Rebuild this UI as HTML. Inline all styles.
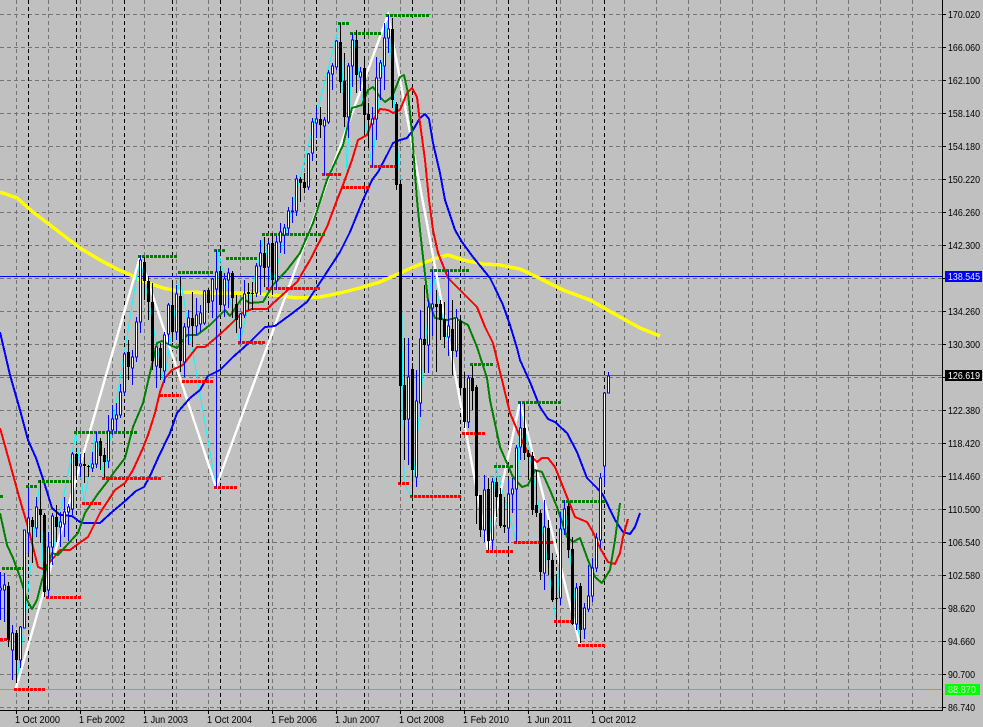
<!DOCTYPE html>
<html><head><meta charset="utf-8"><style>
html,body{margin:0;padding:0;background:#c0c0c0;width:983px;height:727px;overflow:hidden}
svg{display:block}
text{font-family:"Liberation Sans",sans-serif;font-size:10.5px;fill:#000}
</style></head><body>
<svg width="983" height="727" viewBox="0 0 983 727" xmlns="http://www.w3.org/2000/svg">
<rect width="983" height="727" fill="#c0c0c0"/>
<g shape-rendering="crispEdges">
<path fill="none" stroke="#747474" stroke-dasharray="4 3" d="M0 14.5H942M0 47.5H942M0 80.5H942M0 113.5H942M0 146.5H942M0 179.5H942M0 212.5H942M0 245.5H942M0 278.5H942M0 311.5H942M0 344.5H942M0 377.5H942M0 410.5H942M0 443.5H942M0 476.5H942M0 509.5H942M0 542.5H942M0 575.5H942M0 608.5H942M0 641.5H942M0 674.5H942M0 707.5H942"/>
<path fill="none" stroke="#747474" stroke-dasharray="4 3" d="M16.5 0V710M48.5 0V710M80.5 0V710M112.5 0V710M144.5 0V710M176.5 0V710M208.5 0V710M240.5 0V710M272.5 0V710M304.5 0V710M336.5 0V710M368.5 0V710M400.5 0V710M432.5 0V710M464.5 0V710M496.5 0V710M528.5 0V710M560.5 0V710M592.5 0V710M624.5 0V710M656.5 0V710M688.5 0V710M720.5 0V710M752.5 0V710M784.5 0V710M816.5 0V710M848.5 0V710M880.5 0V710M912.5 0V710"/>
<path fill="none" stroke="#000" stroke-dasharray="4 3" d="M28.5 0V710M76.5 0V710M124.5 0V710M172.5 0V710M220.5 0V710M268.5 0V710M316.5 0V710M364.5 0V710M412.5 0V710M460.5 0V710M508.5 0V710M556.5 0V710M604.5 0V710"/>
<path stroke="#606060" d="M0 375.5H942"/>
<path stroke="#0000ff" d="M0 276.5H942"/>
<path stroke="#00ff00" d="M0 689.5H942"/>
<polyline fill="none" stroke="#ffff00" stroke-width="3.5" stroke-linejoin="round" points="0,192 17,198 33,212 50,225 67,238 80,248 100,260 117,269 133,276 140,280 163,288 183,292 213,293 250,293 273,295 297,298 320,297 340,293 360,288 380,282 400,273 423,263 440,257 448,255 463,260 483,264 500,265 520,269 537,277 563,290 590,300 620,317 640,328 660,336"/>
<polyline fill="none" stroke="#00ffff" stroke-width="1" points="16,688 24,628 40,480 44,597 76,433 84,503 96,432 104,477 140,257 164,383 180,277 216,487 218,250 240,343 264,237 272,286 340,23 347,173 353,33 372,167 388,15 400,180 404,484 412,497 432,270 460,397 488,550 496,467 516,540 520,402 540,513 556,620 564,500 580,645"/>
<polyline fill="none" stroke="#ffffff" stroke-width="2.4" points="16,688 140,257 216,487 388,15 488,550 520,402 580,645"/>
<polyline fill="none" stroke="#0000ff" stroke-width="2" stroke-linejoin="round" points="0,332 10,375 20,410 28,440 36,458 44,482 52,508 60,515 72,516 80,522 84,523 100,523 112,512 124,502 136,491 144,487 150,476 158,458 170,433 177,413 190,398 200,390 208,376 220,370 233,357 250,342 265,327 275,326 290,315 307,302 323,278 340,252 350,232 363,200 372,180 378,172 387,155 393,143 400,140 407,138 413,130 420,118 425,114 429,119 433,143 440,173 445,200 455,230 462,242 473,257 490,278 495,288 503,305 510,325 517,348 520,360 530,382 540,407 548,419 555,422 567,433 577,452 587,478 597,488 603,495 615,520 623,532 630,534 635,527 640,513"/>
<polyline fill="none" stroke="#ff0000" stroke-width="2" stroke-linejoin="round" points="0,428 7,453 20,500 28,527 38,567 43,569 50,562 60,550 70,550 78,544 88,537 100,513 115,490 125,483 133,470 143,448 148,435 155,413 160,392 165,378 172,370 183,365 197,347 205,347 217,337 230,325 242,313 252,309 267,309 280,297 297,282 310,260 327,227 337,200 343,185 352,160 358,140 367,135 372,122 380,109 388,110 393,113 400,110 407,93 412,88 417,97 420,123 425,160 429,200 433,230 438,253 448,278 460,290 477,307 485,327 493,343 499,368 502,380 510,413 518,432 528,453 537,462 542,458 548,458 555,467 563,487 575,517 587,522 593,532 600,548 608,562 615,564 620,553 623,537 628,519"/>
<polyline fill="none" stroke="#008000" stroke-width="2" stroke-linejoin="round" points="0,513 7,545 13,558 20,577 27,600 32,609 37,600 42,580 52,553 58,555 67,545 78,533 85,513 97,495 107,482 115,471 125,458 133,427 143,403 150,373 157,343 162,341 170,345 177,348 187,335 197,335 210,325 220,315 225,310 230,316 242,298 250,303 263,302 273,285 287,270 300,253 313,223 327,180 343,145 352,108 362,105 368,90 373,87 380,97 385,102 392,97 400,77 404,75 408,93 412,133 415,173 417,200 420,230 423,257 428,300 435,318 447,320 455,318 468,325 477,347 487,378 490,400 500,447 513,477 522,487 528,485 535,470 542,472 550,490 557,507 567,537 573,542 580,538 588,560 595,577 602,583 610,570 615,540 620,503"/>
<path fill="none" stroke="#008000" stroke-width="3" stroke-dasharray="3 1" d="M0 496.5H3M2 568.5H23M26 486.5H38M38 481.5H71M74 432.5H137M138 256.5H177M178 272.5H213M214 250.5H225M226 258.5H258M262 234.5H325M338 23.5H349M350 33.5H382M386 15.5H429M430 270.5H469M470 364.5H493M494 466.5H513M518 402.5H561M562 501.5H605"/>
<path fill="none" stroke="#ff0000" stroke-width="3" stroke-dasharray="3 1" d="M0 639.5H10M14 689.5H45M46 597.5H81M82 503.5H101M102 478.5H162M160 395.5H181M182 381.5H213M214 487.5H238M238 342.5H265M266 288.5H320M322 174.5H342M342 187.5H369M370 166.5H396M398 483.5H409M410 496.5H462M462 433.5H485M486 551.5H513M514 542.5H553M554 621.5H572M578 645.5H605"/>
<!-- black wicks -->
<path fill="none" stroke="#000" d="M8.5 582V647M16.5 630V683M32.5 517V563M40.5 480V543M44.5 513V597M56.5 505V542M76.5 453V480M84.5 453V483M88.5 465V477M100.5 438V470M104.5 448V478M128.5 340V380M144.5 257V300M148.5 277V320M152.5 283V370M160.5 343V380M172.5 282V342M180.5 277V372M192.5 292V347M208.5 288V313M220.5 268V308M232.5 271V318M236.5 295V333M248.5 283V310M252.5 282V310M264.5 237V287M272.5 233V295M300.5 177V202M304.5 173V193M320.5 107V138M340.5 23V93M344.5 53V127M356.5 30V93M364.5 57V133M368.5 103V148M392.5 18V108M396.5 102V190M400.5 180V484M404.5 338V460M412.5 363V497M424.5 285V373M436.5 290V372M440.5 300V340M444.5 302V348M452.5 300V375M460.5 318V392M464.5 372V428M472.5 365V410M476.5 385V524M480.5 495V537M488.5 478V550M496.5 478V517M500.5 488V528M504.5 497V533M524.5 403V460M528.5 450V480M532.5 452V515M536.5 470V517M540.5 510V580M548.5 520V575M552.5 553V602M556.5 577V620M568.5 503V558M572.5 537V625M580.5 583V643"/>
<!-- black bodies -->
<path fill="none" stroke="#000" stroke-width="3" d="M8.5 586V640M16.5 633V660M32.5 520V527M40.5 509V515M44.5 515V592M56.5 517V527M76.5 454V466M84.5 464V466M88.5 466V467M100.5 441V456M104.5 455V462M128.5 352V367M144.5 262V281M148.5 281V302M152.5 302V361M160.5 348V368M172.5 305V332M180.5 296V361M192.5 318V326M208.5 290V303M220.5 271V305M232.5 273V298M236.5 304V320M248.5 292V294M252.5 293V294M264.5 253V268M272.5 243V280M300.5 179V183M304.5 182V188M320.5 119V125M340.5 42V82M344.5 81V117M356.5 40V75M364.5 68V115M368.5 114V120M392.5 29V100M396.5 104V185M400.5 184V386M404.5 385V420M412.5 369V470M424.5 339V345M436.5 304V307M440.5 304V320M444.5 319V337M452.5 329V351M460.5 321V388M464.5 388V422M472.5 378V391M476.5 387V496M480.5 495V530M488.5 489V541M496.5 482V497M500.5 494V526M504.5 525V527M524.5 428V453M528.5 453V457M532.5 456V510M536.5 505V513M540.5 513V572M548.5 528V560M552.5 560V600M556.5 598V599M568.5 506V550M572.5 549V624M580.5 586V630"/>
<!-- blue wicks -->
<path fill="none" stroke="#0000ff" d="M.5 572V620M4.5 573V622M12.5 625V680M20.5 626V668M24.5 530V628M28.5 487V553M36.5 497V537M48.5 532V598M52.5 513V565M60.5 512V547M64.5 497V537M68.5 504V541M72.5 452V515M80.5 454V477M92.5 452V472M96.5 432V468M108.5 415V468M112.5 405V435M116.5 403V432M120.5 384V418M124.5 352V395M132.5 350V385M136.5 317V362M140.5 255V333M156.5 347V388M164.5 332V383M168.5 303V345M176.5 285V340M184.5 323V377M188.5 310V345M196.5 298V335M200.5 305V332M204.5 290V325M212.5 278V318M216.5 250V487M224.5 273V317M228.5 268V308M240.5 313V343M244.5 280V318M256.5 263V297M260.5 240V295M268.5 241V287M276.5 236V290M280.5 223V253M284.5 224V254M288.5 207V235M292.5 197V223M296.5 175V216M308.5 153V190M312.5 118V161M316.5 108V138M324.5 117V175M328.5 70V124M332.5 63V90M336.5 40V70M348.5 63V138M352.5 33V87M360.5 67V91M372.5 107V167M376.5 57V140M380.5 60V100M384.5 23V90M388.5 15V53M408.5 338V465M416.5 370V487M420.5 310V417M428.5 300V373M432.5 270V336M448.5 270V356M456.5 309V357M468.5 375V428M484.5 475V542M492.5 478V550M508.5 480V542M512.5 478V513M516.5 445V542M520.5 402V460M544.5 500V590M560.5 512V605M564.5 500V535M576.5 583V630M584.5 603V639M588.5 565V612M592.5 558V602M596.5 533V572M600.5 473V548M604.5 393V485M608.5 372V393"/>
<!-- blue bodies -->
<path fill="#ffffff" stroke="#0000ff" d="M-.5 588h2V590h-2zM3.5 585h2V590h-2zM11.5 633h2V650h-2zM19.5 627h2V660h-2zM23.5 530h2V628h-2zM27.5 518h2V533h-2zM35.5 507h2V528h-2zM47.5 547h2V590h-2zM51.5 516h2V547h-2zM59.5 522h2V527h-2zM63.5 512h2V524h-2zM67.5 507h2V512h-2zM71.5 454h2V509h-2zM79.5 464h2V466h-2zM91.5 464h2V468h-2zM95.5 442h2V464h-2zM107.5 431h2V461h-2zM111.5 419h2V430h-2zM115.5 415h2V419h-2zM119.5 392h2V415h-2zM123.5 354h2V392h-2zM131.5 357h2V368h-2zM135.5 322h2V357h-2zM139.5 260h2V322h-2zM155.5 347h2V366h-2zM163.5 335h2V371h-2zM167.5 305h2V334h-2zM175.5 294h2V332h-2zM183.5 327h2V362h-2zM187.5 318h2V327h-2zM195.5 315h2V326h-2zM199.5 313h2V324h-2zM203.5 291h2V323h-2zM211.5 279h2V301h-2zM215.5 272h2V289h-2zM223.5 279h2V305h-2zM227.5 273h2V280h-2zM239.5 314h2V328h-2zM243.5 294h2V315h-2zM255.5 266h2V293h-2zM259.5 253h2V266h-2zM267.5 244h2V267h-2zM275.5 242h2V281h-2zM279.5 232h2V242h-2zM283.5 228h2V235h-2zM287.5 211h2V228h-2zM291.5 211h2V212h-2zM295.5 179h2V211h-2zM307.5 154h2V187h-2zM311.5 122h2V153h-2zM315.5 119h2V123h-2zM323.5 120h2V126h-2zM327.5 73h2V122h-2zM331.5 66h2V74h-2zM335.5 41h2V67h-2zM347.5 66h2V117h-2zM351.5 40h2V66h-2zM359.5 72h2V77h-2zM371.5 119h2V124h-2zM375.5 78h2V119h-2zM379.5 63h2V78h-2zM383.5 38h2V66h-2zM387.5 29h2V38h-2zM407.5 377h2V419h-2zM415.5 401h2V477h-2zM419.5 339h2V403h-2zM427.5 307h2V345h-2zM431.5 304h2V308h-2zM447.5 326h2V337h-2zM455.5 318h2V351h-2zM467.5 378h2V422h-2zM483.5 490h2V530h-2zM491.5 482h2V540h-2zM507.5 494h2V528h-2zM511.5 489h2V494h-2zM515.5 448h2V489h-2zM519.5 428h2V447h-2zM543.5 527h2V573h-2zM559.5 529h2V598h-2zM563.5 509h2V529h-2zM575.5 588h2V624h-2zM583.5 608h2V629h-2zM587.5 596h2V609h-2zM591.5 568h2V596h-2zM595.5 538h2V568h-2zM599.5 478h2V540h-2zM603.5 393h2V466h-2zM607.5 376h2V393h-2z"/>
<!-- axes -->
<path fill="none" stroke="#000" d="M942.5 0V710.5H0"/>
<path fill="none" stroke="#000" d="M943 14.5h3M943 47.5h3M943 80.5h3M943 113.5h3M943 146.5h3M943 179.5h3M943 212.5h3M943 245.5h3M943 278.5h3M943 311.5h3M943 344.5h3M943 377.5h3M943 410.5h3M943 443.5h3M943 476.5h3M943 509.5h3M943 542.5h3M943 575.5h3M943 608.5h3M943 641.5h3M943 674.5h3M943 707.5h3"/>
<path fill="none" stroke="#000" d="M16.5 711v3M80.5 711v3M144.5 711v3M208.5 711v3M272.5 711v3M336.5 711v3M400.5 711v3M464.5 711v3M528.5 711v3M592.5 711v3"/>
<rect x="945" y="271" width="37" height="11" fill="#0000ff"/>
<rect x="945" y="370" width="37" height="11" fill="#000"/>
<rect x="945" y="684" width="35" height="11" fill="#00ff00"/>
</g>
<text x="948" y="18" textLength="32" lengthAdjust="spacingAndGlyphs">170.020</text>
<text x="948" y="51" textLength="32" lengthAdjust="spacingAndGlyphs">166.060</text>
<text x="948" y="84" textLength="32" lengthAdjust="spacingAndGlyphs">162.100</text>
<text x="948" y="117" textLength="32" lengthAdjust="spacingAndGlyphs">158.140</text>
<text x="948" y="150" textLength="32" lengthAdjust="spacingAndGlyphs">154.180</text>
<text x="948" y="183" textLength="32" lengthAdjust="spacingAndGlyphs">150.220</text>
<text x="948" y="216" textLength="32" lengthAdjust="spacingAndGlyphs">146.260</text>
<text x="948" y="249" textLength="32" lengthAdjust="spacingAndGlyphs">142.300</text>
<text x="948" y="280" textLength="32" lengthAdjust="spacingAndGlyphs" style="fill:#e8e8ff">138.545</text>
<text x="948" y="315" textLength="32" lengthAdjust="spacingAndGlyphs">134.260</text>
<text x="948" y="348" textLength="32" lengthAdjust="spacingAndGlyphs">130.300</text>
<text x="948" y="379" textLength="32" lengthAdjust="spacingAndGlyphs" style="fill:#fff">126.619</text>
<text x="948" y="414" textLength="32" lengthAdjust="spacingAndGlyphs">122.380</text>
<text x="948" y="447" textLength="32" lengthAdjust="spacingAndGlyphs">118.420</text>
<text x="948" y="480" textLength="32" lengthAdjust="spacingAndGlyphs">114.460</text>
<text x="948" y="513" textLength="32" lengthAdjust="spacingAndGlyphs">110.500</text>
<text x="948" y="546" textLength="32" lengthAdjust="spacingAndGlyphs">106.540</text>
<text x="948" y="579" textLength="32" lengthAdjust="spacingAndGlyphs">102.580</text>
<text x="948" y="612" textLength="27" lengthAdjust="spacingAndGlyphs">98.620</text>
<text x="948" y="645" textLength="27" lengthAdjust="spacingAndGlyphs">94.660</text>
<text x="948" y="678" textLength="27" lengthAdjust="spacingAndGlyphs">90.700</text>
<text x="948" y="693" textLength="28" lengthAdjust="spacingAndGlyphs" style="fill:#c8ffc8">88.870</text>
<text x="948" y="711" textLength="27" lengthAdjust="spacingAndGlyphs">86.740</text>
<text x="15" y="723" textLength="45" lengthAdjust="spacingAndGlyphs">1 Oct 2000</text>
<text x="79" y="723" textLength="46" lengthAdjust="spacingAndGlyphs">1 Feb 2002</text>
<text x="143" y="723" textLength="45" lengthAdjust="spacingAndGlyphs">1 Jun 2003</text>
<text x="207" y="723" textLength="45" lengthAdjust="spacingAndGlyphs">1 Oct 2004</text>
<text x="271" y="723" textLength="46" lengthAdjust="spacingAndGlyphs">1 Feb 2006</text>
<text x="335" y="723" textLength="45" lengthAdjust="spacingAndGlyphs">1 Jun 2007</text>
<text x="399" y="723" textLength="45" lengthAdjust="spacingAndGlyphs">1 Oct 2008</text>
<text x="463" y="723" textLength="46" lengthAdjust="spacingAndGlyphs">1 Feb 2010</text>
<text x="527" y="723" textLength="45" lengthAdjust="spacingAndGlyphs">1 Jun 2011</text>
<text x="591" y="723" textLength="45" lengthAdjust="spacingAndGlyphs">1 Oct 2012</text>
</svg>
</body></html>
